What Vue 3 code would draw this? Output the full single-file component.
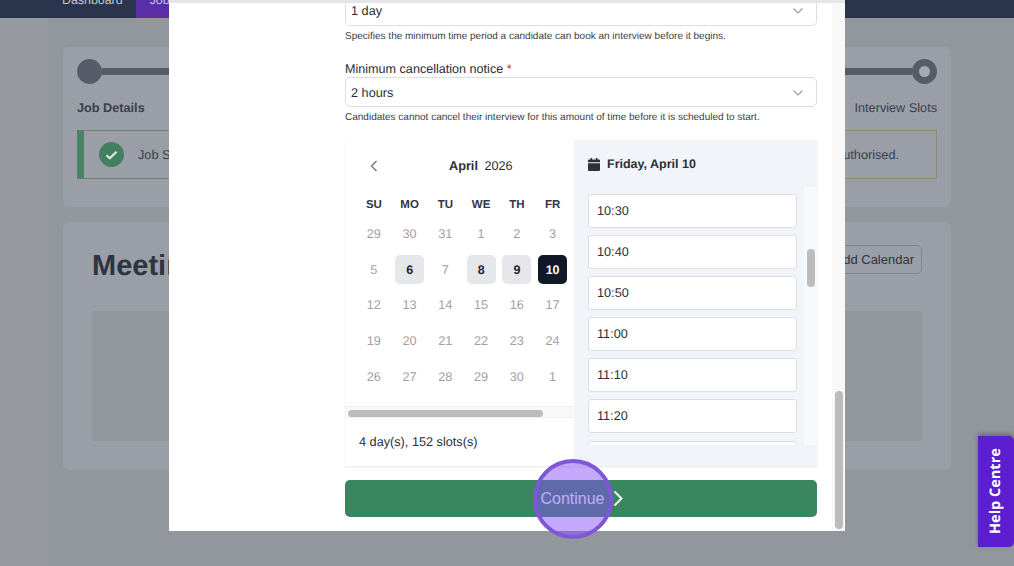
<template>
  <div class="page">
    <div class="main-wrap">
      <nav class="topnav">
        <a class="nav-link">Dashboard</a>
        <a class="nav-link active">Jobs</a>
      </nav>

      <main class="content">
        <!-- stepper card -->
        <section class="card steps-card">
          <div class="track">
            <span class="dot"></span>
            <span class="line"></span>
            <span class="dot ring"></span>
          </div>
          <div class="step-labels">
            <strong>Job Details</strong>
            <span>Interview Slots</span>
          </div>
          <div class="alerts">
            <div class="alert alert-ok">
              <span class="tick">
                <svg width="13" height="10" viewBox="0 0 13 10"><path d="M1.5 5.2 4.8 8.3 11.5 1.7" fill="none" stroke="#dfe6e2" stroke-width="2.2" /></svg>
              </span>
              <span>Job Summary saved</span>
            </div>
            <div class="alert alert-warn">Calendar not yet authorised.</div>
          </div>
        </section>

        <!-- meetings card -->
        <section class="card meetings-card">
          <div class="meetings-head">
            <h2>Meetings</h2>
            <button class="add-btn">Add Calendar</button>
          </div>
          <div class="empty-box"></div>
        </section>
      </main>
    </div>

    <!-- modal -->
    <div class="modal">
      <div class="modal-top"></div>
      <div class="modal-row">
        <div class="modal-body">
          <div class="select select-cut">
            <span>1 day</span>
            <svg class="chev" width="10" height="6" viewBox="0 0 10 6"><path d="M.5.5 5 5 9.500.5" fill="none" stroke="#9a9ca1" stroke-width="1.1" /></svg>
          </div>
          <p class="help">Specifies the minimum time period a candidate can book an interview before it begins.</p>

          <label class="field-label">Minimum cancellation notice <em>*</em></label>
          <div class="select">
            <span>2 hours</span>
            <svg class="chev" width="10" height="6" viewBox="0 0 10 6"><path d="M.5.5 5 5 9.500.5" fill="none" stroke="#9a9ca1" stroke-width="1.1" /></svg>
          </div>
          <p class="help">Candidates cannot cancel their interview for this amount of time before it is scheduled to start.</p>

          <div class="scheduler">
            <div class="cal">
              <div class="cal-head">
                <svg width="8" height="12" viewBox="0 0 8 12"><path d="M6.5 1 1.5 6l5 5" fill="none" stroke="#6f7278" stroke-width="1.3" /></svg>
                <div class="cal-title"><strong>April</strong> <span>2026</span></div>
              </div>
              <div class="cal-clip">
                <div class="week-names">
                  <span v-for="name in weekNames" :key="name">{{ name }}</span>
                </div>
                <div class="days">
                  <span v-for="day in days" :key="day.key" class="day">
                    <span :class="['chip', day.state]">{{ day.label }}</span>
                  </span>
                </div>
              </div>
              <div class="hbar"><span class="hthumb"></span></div>
              <div class="cal-foot">4 day(s), 152 slots(s)</div>
            </div>

            <div class="slots-panel">
              <div class="slots-head">
                <svg width="12" height="13" viewBox="0 0 12 13">
                  <path fill="#2e3138" d="M2.5 0h1.6v1.6h3.8V0h1.6v1.6H11a1 1 0 0 1 1 1V4.300H0V2.600a1 1 0 0 1 1-1h1.500zM0 5.300h12V12a1 1 0 0 1-1 1H1a1 1 0 0 1-1-1z" />
                </svg>
                <strong>Friday, April 10</strong>
              </div>
              <div class="slots-row">
                <div class="slots">
                  <div v-for="slot in slots" :key="slot" class="slot">{{ slot }}</div>
                </div>
                <div class="vbar"><span class="vthumb"></span></div>
              </div>
            </div>
          </div>

          <button class="continue">
            <span>Continue</span>
            <svg width="10" height="17" viewBox="0 0 10 17"><path d="M1.500 1.500 8.500 8.500l-7 7" fill="none" stroke="#f1f4f2" stroke-width="2" /></svg>
          </button>
        </div>
        <div class="modal-scroll"><span class="modal-thumb"></span></div>
      </div>
    </div>

    <!-- click marker on top of the button -->
    <div class="marker"></div>

    <div class="help-tab">Help Centre</div>
  </div>
</template>

<script setup>
// Saturday sits past the scrolled edge of the calendar, so only six columns are drawn
const weekNames = ['SU', 'MO', 'TU', 'WE', 'TH', 'FR'];

const rows = [
  [29, 30, 31, 1, 2, 3],
  [5, 6, 7, 8, 9, 10],
  [12, 13, 14, 15, 16, 17],
  [19, 20, 21, 22, 23, 24],
  [26, 27, 28, 29, 30, 1]
];

const available = [6, 8, 9];

const days = rows.flatMap((row, r) =>
  row.map((label, c) => {
    let state = '';
    if (r === 1 && available.includes(label)) state = 'open';
    if (r === 1 && label === 10) state = 'picked';
    return { key: r + '-' + c, label, state };
  })
);

const slots = ['10:30', '10:40', '10:50', '11:00', '11:10', '11:20', '11:30'];
</script>

<style>
html,
body {
  margin: 0;
  overflow: hidden;
}
</style>

<style scoped>
* {
  box-sizing: border-box;
}

.page {
  position: relative;
  width: 1014px;
  height: 566px;
  overflow: hidden;
  background: #969aa0;
  font-family: "Liberation Sans", Arial, sans-serif;
  text-rendering: geometricPrecision;
  color: #2b2f36;
}

.main-wrap {
  height: 100%;
}

/* top nav, mostly scrolled away */
.topnav {
  display: flex;
  height: 18px;
  padding-left: 48px;
  overflow: hidden;
  background: #2b344d;
}

.nav-link {
  height: 18px;
  padding: 0 13px 0 14px;
  line-height: 0;
  font-size: 12.4px;
  color: #c3c6ce;
}

.nav-link.active {
  width: 60px;
  background: #5a2fa6;
}

.content {
  height: 548px;
  margin-left: 48px;
  padding: 29px 63px 0 15px;
  background: #92969d;
}

.card {
  background: #9a9ea6;
  border-radius: 6px;
}

.steps-card {
  height: 160px;
  padding: 12px 14px;
}

.track {
  display: flex;
  align-items: center;
}

.dot {
  flex: none;
  width: 25px;
  height: 25px;
  border-radius: 50%;
  background: #575c68;
}

.dot.ring {
  border: 7px solid #565b66;
  background: #a6a9b0;
}

.line {
  flex: 1;
  height: 7px;
  background: #565b66;
}

.step-labels {
  display: flex;
  justify-content: space-between;
  margin-top: 16px;
  font-size: 12.7px;
  line-height: 16px;
  color: #3a404d;
}

.alerts {
  display: flex;
  gap: 16px;
  margin-top: 14px;
}

.alert {
  display: flex;
  flex: 1;
  align-items: center;
  height: 49px;
  font-size: 12.7px;
  color: #3a404d;
}

.alert-ok {
  gap: 14px;
  padding-left: 15px;
  border: 1px solid #6c8079;
  border-left: 7px solid #4a8264;
}

.alert-warn {
  justify-content: flex-end;
  padding-right: 37px;
  border: 1px solid #94896f;
}

.tick {
  display: flex;
  align-items: center;
  justify-content: center;
  width: 25px;
  height: 25px;
  border-radius: 50%;
  background: #43805f;
}

.meetings-card {
  height: 248px;
  margin-top: 15px;
  padding: 23px 29px;
}

.meetings-head {
  display: flex;
  align-items: flex-start;
  justify-content: space-between;
  height: 29px;
  margin-bottom: 37px;
}

.meetings-head h2 {
  margin: 4px 0 0;
  font-size: 29px;
  line-height: 34px;
  font-weight: 700;
  color: #2f343f;
}

.add-btn {
  height: 29px;
  padding: 0 7px 0 12px;
  border: 1px solid #80848c;
  border-radius: 5px;
  background: transparent;
  font-family: inherit;
  font-size: 13px;
  color: #2f343f;
}

.empty-box {
  height: 130px;
  border-radius: 3px;
  background: #92969d;
}

/* modal */
.modal {
  position: absolute;
  top: 0;
  left: 169px;
  width: 676px;
  height: 531px;
  background: #fff;
}

.modal-top {
  height: 3px;
  background: #e5e6e9;
}

.modal-row {
  display: flex;
  height: 528px;
}

.modal-body {
  flex: 1;
  padding: 0 15px 0 176px;
}

.modal-scroll {
  width: 13px;
  padding: 388px 0 0 3px;
  background: #f8f8f8;
}

.modal-thumb {
  display: block;
  width: 8px;
  height: 138px;
  border-radius: 4px;
  background: #bcbcbc;
}

.select {
  display: flex;
  align-items: center;
  justify-content: space-between;
  height: 30px;
  padding: 1px 13px 0 5px;
  border: 1px solid #dcdee2;
  border-radius: 5px;
  font-size: 12.7px;
  color: #2b2f36;
}

.select-cut {
  height: 23px;
  padding-top: 0;
  padding-bottom: 6px;
  border-top: 0;
  border-radius: 0 0 5px 5px;
}

.help {
  margin: 4px 0 0;
  font-size: 10px;
  line-height: 14px;
  color: #3a3e45;
}

.field-label {
  display: block;
  margin-top: 17px;
  font-size: 12.6px;
  line-height: 16px;
  color: #2b2f36;
}

.field-label em {
  font-style: normal;
  color: #c0392b;
}

.scheduler {
  display: flex;
  height: 326px;
  margin-top: 15px;
  box-shadow: 0 1px 2px rgba(0, 0, 0, 0.1);
}

.cal {
  flex: none;
  width: 229px;
  overflow: hidden;
  background: #fff;
}

.cal-head {
  display: flex;
  align-items: center;
  height: 51px;
  padding-left: 25px;
  font-size: 12.7px;
}

.cal-title {
  margin-left: 71px;
  white-space: pre;
}

.cal-title span {
  margin-left: 3px;
}

.cal-clip {
  width: 229px;
  height: 215px;
  padding-left: 11px;
  overflow: hidden;
}

.week-names,
.days {
  display: grid;
  grid-template-columns: repeat(6, 35.75px);
}

.week-names {
  height: 25px;
  padding-top: 2px;
  align-items: center;
  justify-items: center;
  font-size: 11.5px;
  font-weight: 700;
  color: #343842;
}

.days {
  grid-auto-rows: 35.75px;
}

.day {
  display: flex;
  align-items: center;
  justify-content: center;
  font-size: 12.7px;
  color: #9fa1a5;
}

.chip {
  display: flex;
  align-items: center;
  justify-content: center;
  width: 29px;
  height: 29px;
  border-radius: 5px;
}

.chip.open {
  background: #e5e7eb;
  font-weight: 700;
  font-size: 12.5px;
  color: #1f2430;
}

.chip.picked {
  background: #111827;
  font-weight: 700;
  font-size: 12.5px;
  color: #fff;
}

.hbar {
  height: 12px;
  padding: 3px 3px 0;
  border-top: 1px solid #f0f0f0;
  border-bottom: 1px solid #f0f0f0;
  background: #f8f8f8;
}

.hthumb {
  display: block;
  width: 195px;
  height: 7px;
  border-radius: 4px;
  background: #bcbcbc;
}

.cal-foot {
  padding: 16px 0 0 14px;
  font-size: 12.7px;
  line-height: 16px;
  color: #2b2f36;
}

.slots-panel {
  flex: 1;
  background: #f1f4f9;
}

.slots-head {
  display: flex;
  align-items: center;
  gap: 7px;
  height: 47px;
  padding-top: 1px;
  padding-left: 14px;
  font-size: 12.5px;
  color: #2b2f36;
}

.slots-row {
  display: flex;
  height: 258px;
}

.slots {
  flex: none;
  display: flex;
  flex-direction: column;
  gap: 7.1px;
  width: 230px;
  height: 258px;
  padding: 7px 7px 0 14px;
  overflow: hidden;
}

.slot {
  flex: none;
  height: 34px;
  padding-left: 8px;
  border: 1px solid #dcdfe4;
  border-radius: 3px;
  background: #fff;
  font-size: 12.7px;
  line-height: 33px;
  color: #2b2f36;
}

.vbar {
  width: 13px;
  padding: 62px 0 0 3px;
  background: #f8f9fa;
}

.vthumb {
  display: block;
  width: 8px;
  height: 38px;
  border-radius: 4px;
  background: #bcbcbc;
}

.continue {
  display: flex;
  align-items: center;
  justify-content: center;
  gap: 8px;
  width: 100%;
  height: 37px;
  margin-top: 14px;
  padding: 0 0 0 1px;
  border: none;
  border-radius: 5px;
  background: #3a865f;
  font-family: inherit;
  font-size: 16px;
  color: #fff;
}

/* tutorial marker */
.marker {
  position: absolute;
  top: 459px;
  left: 533px;
  width: 80px;
  height: 80px;
  border: 4px solid #7e57d8;
  border-radius: 50%;
  background: rgba(134, 80, 247, 0.49);
}

.help-tab {
  position: absolute;
  top: 436px;
  left: 978px;
  display: flex;
  align-items: center;
  justify-content: center;
  width: 36px;
  height: 111px;
  padding-left: 1px;
  border-radius: 5px 0 0 5px;
  background: #5b1fd0;
  box-shadow: 0 2px 5px rgba(0, 0, 0, 0.3);
  font-family: "Open Sans", sans-serif;
  font-size: 14.5px;
  font-weight: 700;
  color: #fff;
  writing-mode: vertical-rl;
  transform: rotate(180deg);
}
</style>
